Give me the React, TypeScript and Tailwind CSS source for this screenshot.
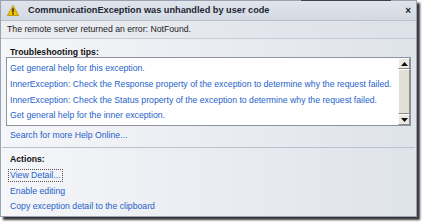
import React from "react";

const tips = [
  "Get general help for this exception.",
  "InnerException: Check the Response property of the exception to determine why the request failed.",
  "InnerException: Check the Status property of the exception to determine why the request failed.",
  "Get general help for the inner exception.",
];

const WarningIcon = () => (
  <svg width="12" height="11" viewBox="0 0 12 11" className="shrink-0">
    <path d="M6 0.5 L11.6 10.5 L0.4 10.5 Z" fill="#f5c400" stroke="#b88a00" strokeWidth="0.8" />
    <rect x="5.3" y="3.3" width="1.4" height="4.2" fill="#1a1a1a" />
    <rect x="5.3" y="8.2" width="1.4" height="1.4" fill="#1a1a1a" />
  </svg>
);

const ScrollButton = ({ up }: { up?: boolean }) => (
  <div className="h-[11px] w-full bg-[#ece9e2] border border-t-white border-l-white border-r-[#8c8a85] border-b-[#8c8a85] flex items-center justify-center">
    <svg width="7" height="4" viewBox="0 0 7 4">
      {up ? <path d="M3.5 0 L7 4 L0 4 Z" fill="#111" /> : <path d="M0 0 L7 0 L3.5 4 Z" fill="#111" />}
    </svg>
  </div>
);

export default function App() {
  return (
    <div className="w-[422px] h-[222px] bg-white overflow-hidden relative font-['Liberation_Sans',Arial,sans-serif]">
      <div className="absolute top-0 left-[301px] w-[90px] h-px bg-[#3c4250]" />
      <div className="w-[417px] h-[217px] flex flex-col border border-[#9aa3b1] bg-gradient-to-r from-[#f5f6f9] to-[#dfe3ea] shadow-[3px_3px_2px_rgba(20,20,25,0.85)]">
        {/* header */}
        <div className="h-[20px] shrink-0 flex items-center pl-[6px] pr-[5px] bg-gradient-to-b from-[#e0e5ec] to-[#d2d9e3] border-b border-[#b7c0cc]">
          <WarningIcon />
          <span className="ml-[9px] text-[9.2px] font-bold text-[#1d2633] leading-none">
            CommunicationException was unhandled by user code
          </span>
          <span className="ml-auto text-[10px] font-bold text-[#222] leading-none">×</span>
        </div>
        {/* message */}
        <div className="h-[18px] shrink-0 flex items-center pl-[6px] bg-gradient-to-r from-[#eceef2] to-[#dde1e8] border-b border-[#c6ccd6] text-[8.7px] text-[#222]">
          The remote server returned an error: NotFound.
        </div>
        {/* tips */}
        <div className="pt-[8px] pl-[9px] text-[8.7px] font-bold text-[#111] leading-[10px]">
          Troubleshooting tips:
        </div>
        <div className="mt-0 ml-[5px] mr-[5px] h-[69px] flex border border-[#8e949e] bg-white">
          <div className="flex-1 flex flex-col pt-[3px] pl-[3px]">
            {tips.map((t) => (
              <div key={t} className="h-[15.7px] flex items-center text-[8.7px] text-[#2563c9] whitespace-nowrap">
                {t}
              </div>
            ))}
          </div>
          <div className="w-[12px] flex flex-col bg-[#e4e1da]">
            <ScrollButton up />
            <div className="flex-1 bg-[#e2dfd8] border border-t-white border-l-white border-r-[#8c8a85] border-b-[#8c8a85]" />
            <ScrollButton />
          </div>
        </div>
        <div className="mt-[4px] pl-[9px] text-[8.7px] text-[#2563c9] leading-[10px]">
          Search for more Help Online...
        </div>
        <div className="mt-[7px] mx-[1px] h-px bg-[#b9c2ce]" />
        {/* actions */}
        <div className="pt-[6px] pl-[9px] text-[8.7px] font-bold text-[#111] leading-[10px]">Actions:</div>
        <div className="mt-[5px] pl-[7px] flex">
          <span className="px-[1px] py-px border border-dotted border-[#555] text-[8.7px] text-[#2563c9] leading-none">
            View Detail...
          </span>
        </div>
        <div className="mt-[4px] pl-[9px] text-[8.7px] text-[#2563c9] leading-[10px]">Enable editing</div>
        <div className="mt-[5px] pl-[9px] text-[8.7px] text-[#2563c9] leading-[10px]">
          Copy exception detail to the clipboard
        </div>
      </div>
    </div>
  );
}
